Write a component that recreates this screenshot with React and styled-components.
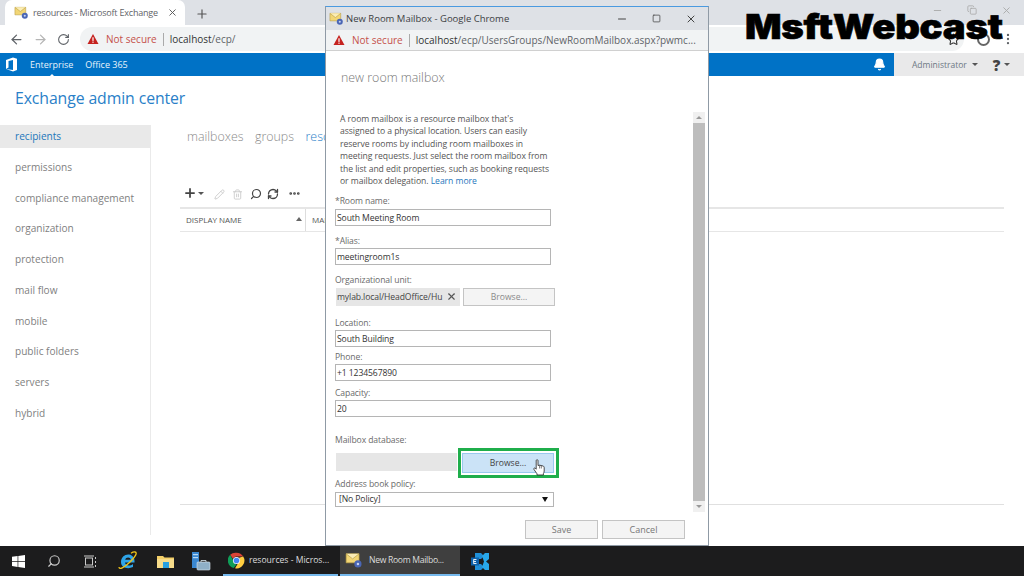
import React from 'react';
import styled, { createGlobalStyle } from 'styled-components';
import { ArrowLeft, ArrowRight, RotateCw, Plus, X, Minus, Square, Copy, Search, Pencil, Trash2, RefreshCw, MoreHorizontal, Star, Bell, MoreVertical } from 'lucide-react';

const Global = createGlobalStyle`
  html, body { margin: 0; padding: 0; background: #fff; }
  * { box-sizing: border-box; }
`;

const Screen = styled.div`
  position: relative;
  width: 1024px;
  height: 576px;
  overflow: hidden;
  display: flex;
  flex-direction: column;
  font-family: "Open Sans", "Liberation Sans", sans-serif;
  background: #fff;
`;

const TabStrip = styled.div`
  height: 25px;
  flex: none;
  background: #dee1e6;
  display: flex;
  align-items: flex-end;
  padding-left: 5px;
`;

const Tab = styled.div`
  width: 180px;
  height: 25px;
  background: #fff;
  border-radius: 7px 7px 0 0;
  display: flex;
  align-items: center;
  gap: 4px;
  padding: 0 0 0 9px;
  font-size: 9px;
  letter-spacing: -0.2px;
  color: #5f6368;
  white-space: nowrap;
`;

const TabTitle = styled.span`
  width: 130px;
`;

const TabClose = styled.span`
  display: flex;
  color: #555;
`;

const NewTab = styled.span`
  display: flex;
  margin: 0 0 4px 10px;
  color: #555;
`;

const BrowserBar = styled.div`
  height: 28px;
  flex: none;
  background: #fff;
  display: flex;
  align-items: center;
  padding: 0 0 0 9px;
  gap: 9px;
  color: #5f6368;
`;

const Omnibox = styled.div`
  margin-left: 1px;
  width: 884px;
  height: 24px;
  flex: none;
  border-radius: 12px;
  background: #f1f3f4;
  display: flex;
  align-items: center;
  padding: 0 4px 0 7px;
  font-size: 10px;
  color: #333;
`;

const Warning = styled.span`
  color: #c5504a;
  display: flex;
  align-items: center;
  gap: 7px;
  white-space: nowrap;
`;

const UrlDivider = styled.span`
  width: 1px;
  height: 13px;
  background: #aaa;
  margin: 0 6px;
  flex: none;
`;

const UrlRest = styled.span`
  color: #5f6368;
`;

const StarSlot = styled.span`
  margin-left: auto;
  display: flex;
`;

const Avatar = styled.span`
  width: 13px;
  height: 13px;
  margin: 0 2px 0 4px;
  flex: none;
  border-radius: 50%;
  border: 2.5px solid #666;
`;

const NavBar = styled.div`
  height: 23px;
  flex: none;
  background: #0072c6;
  display: flex;
  align-items: center;
  color: #fff;
  font-size: 9px;
`;

const NavLink = styled.span`
  position: relative;
  display: flex;
  margin-left: ${p => p.$gap}px;
  color: #e8f2fb;
  &::after {
    content: ${p => p.$active ? "''" : 'none'};
    position: absolute;
    left: 50%;
    bottom: -6px;
    margin-left: -3px;
    border: 3px solid transparent;
    border-top: 0;
    border-bottom-color: #fff;
  }
`;

const NavRight = styled.div`
  margin-left: auto;
  height: 100%;
  display: flex;
  align-items: center;
`;

const BellBox = styled.div`
  width: 30px;
  display: flex;
  justify-content: flex-start;
  padding-left: 9px;
`;

const UserBox = styled.div`
  width: 130px;
  height: 100%;
  background: #e9e9ea;
  color: #6d7884;
  display: flex;
  align-items: center;
  padding-left: 18px;
  font-size: 8.5px;
`;

const Caret = styled.span`
  display: inline-block;
  flex: none;
  border: ${p => p.$big ? 3.5 : 3}px solid transparent;
  border-bottom: 0;
  border-top: ${p => p.$big ? 5 : 3.5}px solid ${p => p.$color || '#555'};
  margin-left: ${p => p.$gap || 5}px;
`;

const HelpMark = styled.span`
  font-weight: 800;
  font-size: 15px;
  color: #444;
  margin-left: 15px;
`;

const Body = styled.div`
  flex: 1;
  min-height: 0;
  display: flex;
  flex-direction: column;
  background: #fff;
`;

const AdminTitle = styled.h1`
  margin: 0;
  height: 49px;
  padding: 11px 0 0 15px;
  font-size: 15.8px;
  font-weight: 400;
  letter-spacing: -0.1px;
  color: #2a80c8;
  flex: none;
`;

const Columns = styled.div`
  flex: 1;
  display: flex;
`;

const Sidebar = styled.nav`
  width: 151px;
  height: 410px;
  flex: none;
  border-right: 1px solid #eaeaea;
`;

const SideItem = styled.div`
  height: 30.75px;
  padding: 0 0 0 15px;
  font-size: 10.1px;
  line-height: 23px;
  color: ${p => p.$active ? '#2377bb' : '#7f7f7f'};
  background: ${p => p.$active ? 'linear-gradient(#e9e9e9 0 23px, transparent 23px)' : 'transparent'};
`;

const Main = styled.div`
  flex: 1;
  padding: 0 20px 0 29px;
  display: flex;
  flex-direction: column;
`;

const SubTabs = styled.div`
  display: flex;
  gap: 11.5px;
  padding: 0 0 0 7px;
  font-size: 12.4px;
  font-weight: 300;
  height: 23px;
  line-height: 23px;
`;

const SubTab = styled.span`
  color: ${p => p.$active ? '#2a80c8' : '#8a8a8a'};
`;

const ListToolbar = styled.div`
  height: 59px;
  display: flex;
  align-items: flex-end;
  padding: 0 0 7px 3px;
  color: #444;
`;

const ToolSlot = styled.span`
  width: ${p => p.$w}px;
  display: flex;
  align-items: center;
  flex: none;
`;

const TableHead = styled.div`
  height: 25px;
  border-top: 2px solid #e6e6e6;
  border-bottom: 1px solid #e6e6e6;
  display: flex;
  align-items: center;
  font-size: 8px;
  color: #555;
`;

const HeadCell = styled.div`
  width: ${p => p.$w}px;
  height: 100%;
  display: flex;
  align-items: center;
  justify-content: space-between;
  padding: 0 3px 2px 6px;
  border-right: 1px solid #ddd;
`;

const SortUp = styled.span`
  border: 3px solid transparent;
  border-top: 0;
  border-bottom: 4px solid #666;
`;

const TableFill = styled.div`
  height: 273px;
  border-bottom: 1px solid #e0e0e0;
`;

const Taskbar = styled.div`
  height: 30px;
  flex: none;
  background: #1c1c1d;
  display: flex;
  align-items: center;
  color: #ddd;
`;

const TrayIcon = styled.div`
  width: ${p => p.$w || 36}px;
  height: 100%;
  flex: none;
  display: flex;
  align-items: center;
  justify-content: center;
`;

const TaskApp = styled.div`
  width: ${p => p.$w}px;
  height: 100%;
  flex: none;
  margin-left: ${p => p.$gap || 0}px;
  display: flex;
  align-items: center;
  gap: ${p => p.$open ? 6 : 4}px;
  padding-left: 5px;
  font-size: 8.6px;
  letter-spacing: ${p => p.$open ? -0.3 : 0}px;
  white-space: nowrap;
  background: ${p => p.$open ? '#3f3f3f' : 'transparent'};
  border-bottom: 2px solid #76b9ed;
`;

const Popup = styled.section`
  position: absolute;
  left: 325px;
  top: 6px;
  width: 384px;
  height: 540px;
  background: #fff;
  border: 1px solid #8f9aa5;
  border-top-color: #4a9ae0;
  display: flex;
  flex-direction: column;
`;

const PopupTitle = styled.div`
  height: 23px;
  flex: none;
  background: #dee1e6;
  display: flex;
  align-items: center;
  padding: 0 11px 0 3px;
  gap: 2px;
  font-size: 9.5px;
  color: #3c4043;
`;

const WinControls = styled.div`
  margin-left: auto;
  display: flex;
  align-items: center;
  gap: 24px;
  color: #444;
`;

const PopupUrl = styled.div`
  height: 21px;
  flex: none;
  background: #f1f3f4;
  border-bottom: 1px solid #d0d0d0;
  display: flex;
  align-items: center;
  padding: 0 0 0 7px;
  font-size: 10px;
  color: #333;
  white-space: nowrap;
`;

const PopupBody = styled.div`
  position: relative;
  flex: 1;
  min-height: 0;
  padding: 19px 0 0 14px;
`;

const DialogTitle = styled.h2`
  margin: 0 0 27px 1px;
  font-size: 12.4px;
  line-height: 16px;
  font-weight: 300;
  color: #777;
`;

const Intro = styled.p`
  margin: 0 0 8px;
  white-space: nowrap;
  font-size: 8.6px;
  line-height: 12.4px;
  letter-spacing: -0.05px;
  color: #555;
  a { color: #1e77bd; }
`;

const Form = styled.div`
  margin-left: -5px;
  width: 222px;
`;

const Label = styled.div`
  font-size: 8.6px;
  line-height: 12px;
  height: 12px;
  letter-spacing: -0.1px;
  color: #6a6a6a;
  margin-top: ${p => p.$top || 0}px;
`;

const Input = styled.div`
  height: 17px;
  width: 216px;
  border: 1px solid #b5b5b5;
  padding: 1px 0 0 1px;
  font-size: 8.6px;
  line-height: 15px;
  letter-spacing: -0.1px;
  color: #333;
  margin-top: 1.5px;
`;

const PickRow = styled.div`
  display: flex;
  align-items: flex-start;
  margin-top: ${p => p.$top || 2}px;
  gap: ${p => p.$gap || 3}px;
  width: 240px;
`;

const PickValue = styled.div`
  width: ${p => p.$w}px;
  margin-left: 1px;
  height: 18px;
  flex: none;
  background: #e6e6e6;
  display: flex;
  align-items: center;
  justify-content: space-between;
  padding: 0 3px 0 1px;
  font-size: 8.6px;
  letter-spacing: -0.1px;
  color: #444;
  overflow: hidden;
  white-space: nowrap;
`;

const ClipText = styled.span`
  width: 107px;
  overflow: hidden;
`;

const BrowseButton = styled.div`
  position: relative;
  width: 92px;
  height: ${p => p.$hot ? 20 : 18}px;
  flex: none;
  border: 1px solid ${p => p.$hot ? '#99c9ee' : '#c4c4c4'};
  background: ${p => p.$hot ? '#cbe3f7' : '#f4f4f4'};
  font-size: 8.6px;
  line-height: ${p => p.$hot ? 18 : 16}px;
  text-align: center;
  color: ${p => p.$hot ? '#444' : '#8a8a8a'};
`;

const GreenFrame = styled.span`
  position: absolute;
  inset: -6px -6px -6px -5px;
  border: 3px solid #1fae4b;
`;

const HandCursor = styled.span`
  position: absolute;
  left: 70px;
  top: 5px;
  display: flex;
`;

const Select = styled.div`
  width: 219px;
  height: 15px;
  margin-top: 2px;
  border: 1px solid #b5b5b5;
  display: flex;
  align-items: center;
  justify-content: space-between;
  padding: 0 5px 0 3px;
  font-size: 8.6px;
  letter-spacing: -0.1px;
  color: #333;
`;

const Scrollbar = styled.div`
  position: absolute;
  right: 3px;
  top: 61px;
  bottom: 33px;
  width: 12px;
  background: #f0f0f0;
  display: flex;
  flex-direction: column;
  align-items: center;
  justify-content: space-between;
  padding: 4px 0;
`;

const ScrollThumb = styled.div`
  flex: 1;
  width: 100%;
  margin: 4px 0;
  background: #bdbdbd;
`;

const ScrollArrow = styled.span`
  border: 3px solid transparent;
  ${p => p.$up ? 'border-top: 0; border-bottom: 3px solid #999;' : 'border-bottom: 0; border-top: 3px solid #999;'}
`;

const Footer = styled.div`
  position: absolute;
  left: 199px;
  bottom: 6px;
  display: flex;
  gap: 4px;
`;

const FootButton = styled.div`
  width: ${p => p.$w}px;
  height: 19px;
  border: 1px solid #c4c4c4;
  background: #f4f4f4;
  font-size: 9px;
  line-height: 17px;
  text-align: center;
  color: #777;
`;

const Watermark = styled.div`
  position: absolute;
  left: 745px;
  top: 4px;
  font-family: "Inter", "Liberation Sans", sans-serif;
  font-weight: 900;
  font-size: 34px;
  line-height: 46px;
  letter-spacing: -0.2px;
  color: #000;
  -webkit-text-stroke: 0.6px #000;
  white-space: nowrap;
  transform: scaleX(1.125);
  transform-origin: left center;
`;

const FaintControls = styled.div`
  position: absolute;
  left: 932px;
  top: 5px;
  display: flex;
  gap: 24px;
  color: #aaa;
`;

const MailIcon = ({ size = 15 }) => (
  <svg width={size} height={size} viewBox="0 0 16 16" style={{ flex: 'none' }}>
    <path d="M1 2.5 L12.5 2.5 L12.5 10.5 L1 10.5 Z" fill="#f2d675" stroke="#b59b45" strokeWidth="0.6" />
    <path d="M1 2.5 L6.8 7 L12.5 2.5" fill="#fbedb5" stroke="#b59b45" strokeWidth="0.6" />
    <circle cx="11.5" cy="11.5" r="3.2" fill="#4a66b5" />
    <circle cx="11.5" cy="11.5" r="1.1" fill="#c8d4f0" />
  </svg>
);

const WarnIcon = ({ size = 12 }) => (
  <svg width={size} height={size} viewBox="0 0 12 12">
    <path d="M6 1 L11.5 11 L0.5 11 Z" fill="#c5221f" />
    <rect x="5.4" y="4.3" width="1.2" height="3.6" fill="#fff" />
    <rect x="5.4" y="8.6" width="1.2" height="1.2" fill="#fff" />
  </svg>
);

const OfficeLogo = () => (
  <svg width="13" height="15" viewBox="0 0 13 15">
    <path d="M1 3 L8 0.5 L12 1.8 L12 13 L8 14.5 L1 12 L8 13 L8 3 L3.5 4 L3.5 10.5 L1 12 Z" fill="#fff" />
  </svg>
);

const WindowsLogo = () => (
  <svg width="13" height="13" viewBox="0 0 13 13" fill="#fff">
    <path d="M0 1.8 L5.6 1 L5.6 6 L0 6 Z M6.3 0.9 L13 0 L13 6 L6.3 6 Z M0 6.8 L5.6 6.8 L5.6 11.9 L0 11.1 Z M6.3 6.8 L13 6.8 L13 13 L6.3 12.1 Z" />
  </svg>
);

const TaskViewIcon = () => (
  <svg width="13" height="13" viewBox="0 0 13 13" fill="none" stroke="#ccc" strokeWidth="1">
    <rect x="1.5" y="3" width="7" height="7" />
    <path d="M0 1 H10 M0 12 H10 M11.5 2 V4 M11.5 6 V8 M11.5 10 V12" />
  </svg>
);

const IeIcon = () => (
  <svg width="20" height="20" viewBox="0 0 20 20">
    <path d="M3 11 C3 6 7 3 11 3.5 C15 4 17 8 16.5 11.5 L7 11.5 C7.5 15 12 15.5 15 13 L15 16 C10 18.5 3 17 3 11 Z M7.2 8.8 L12.8 8.8 C12.5 5.8 7.8 5.8 7.2 8.8 Z" fill="#2ea4e8" fillRule="evenodd" />
    <path d="M1 16 C1 19 6 17 12 11 C17 6 20 1.5 17 1 C15.8 0.8 14 1.6 13 2.3" fill="none" stroke="#f0c419" strokeWidth="1.3" />
  </svg>
);

const FolderIcon = () => (
  <svg width="17" height="15" viewBox="0 0 17 15">
    <path d="M0 2 L6 2 L7.5 3.5 L17 3.5 L17 14 L0 14 Z" fill="#f3cf68" />
    <rect x="0" y="5" width="17" height="9" fill="#f7dc8a" />
    <rect x="6" y="8" width="6" height="6" fill="#29a0e0" />
  </svg>
);

const ServerManagerIcon = () => (
  <svg width="20" height="20" viewBox="0 0 20 20">
    <rect x="1" y="1" width="7" height="16" fill="#3a87d0" />
    <rect x="2" y="3" width="5" height="1.2" fill="#b7d8f4" />
    <rect x="2" y="6" width="5" height="1.2" fill="#b7d8f4" />
    <rect x="6" y="11" width="13" height="8" rx="1" fill="#8fb0c8" stroke="#dce8f0" strokeWidth="0.6" />
    <path d="M10 11 V9.5 H15 V11" fill="none" stroke="#dce8f0" strokeWidth="0.8" />
  </svg>
);

const ChromeIcon = () => (
  <svg width="17" height="17" viewBox="0 0 48 48" style={{ flex: 'none' }}>
    <path d="M24 2 A22 22 0 0 1 43 13 L24 13 A11 11 0 0 0 14 19 L6 8 A22 22 0 0 1 24 2 Z" fill="#db4437" />
    <path d="M6 8 L16 26 A11 11 0 0 0 24 35 L16 45 A22 22 0 0 1 6 8 Z" fill="#0f9d58" />
    <path d="M43 13 A22 22 0 0 1 20 46 L30 29 A11 11 0 0 0 31 16 Z" fill="#ffcd40" />
    <circle cx="24" cy="24" r="10" fill="#fff" />
    <circle cx="24" cy="24" r="8" fill="#4285f4" />
  </svg>
);

const ExchangeIcon = () => (
  <svg width="18" height="17" viewBox="0 0 18 17">
    <path d="M4 0 H10 L13 3 L10 6 H4 Z M10 11 H4 V17 H10 L13 14 Z" fill="#1f8fd8" />
    <path d="M11 3 L14 0 H18 V6 L15 8.5 L18 11 V17 H14 L11 14 L13 8.5 Z" fill="#28a8ea" />
    <rect x="0" y="4.5" width="8" height="8" fill="#0f62ab" />
    <path d="M2.5 6.5 H5.5 M2.5 8.5 H5 M2.5 10.5 H5.5 M2.7 6.5 V10.5" stroke="#fff" strokeWidth="0.9" fill="none" />
  </svg>
);

// pointer hand over the highlighted Browse button
const PointerHand = () => (
  <svg width="12" height="17" viewBox="0 0 12 17">
    <path d="M3.2 1.6 C3.2 0.4 5 0.4 5 1.6 L5 6.5 L6.6 6.2 L8.2 6.5 L10 7 C10.9 7.3 11.2 7.9 11.2 8.8 L11.2 12 C11.2 13 10.8 13.8 10.4 14.6 L10.4 16 L4 16 L4 14.8 L1 10.5 C0.3 9.5 1.4 8.5 2.3 9.3 L3.2 10.2 Z" fill="#fff" stroke="#222" strokeWidth="0.8" strokeLinejoin="round" />
    <path d="M6.6 6.4 V9.5 M8.3 6.6 V9.5" stroke="#222" strokeWidth="0.6" fill="none" />
  </svg>
);

const sideItems = ['recipients', 'permissions', 'compliance management', 'organization', 'protection', 'mail flow', 'mobile', 'public folders', 'servers', 'hybrid'];

const App = () => (
  <Screen>
    <Global />
    <TabStrip>
      <Tab>
        <MailIcon />
        <TabTitle>resources - Microsoft Exchange</TabTitle>
        <TabClose><X size={11} /></TabClose>
      </Tab>
      <NewTab><Plus size={14} /></NewTab>
    </TabStrip>
    <BrowserBar>
      <ArrowLeft size={15} />
      <ArrowRight size={15} color="#b5b5b5" />
      <RotateCw size={13} />
      <Omnibox>
        <Warning><WarnIcon />Not secure</Warning>
        <UrlDivider />
        <span>localhost<UrlRest>/ecp/</UrlRest></span>
        <StarSlot><Star size={13} /></StarSlot>
      </Omnibox>
      <Avatar />
      <MoreVertical size={14} />
    </BrowserBar>
    <NavBar>
      <NavLink $gap={5}><OfficeLogo /></NavLink>
      <NavLink $gap={12} $active>Enterprise</NavLink>
      <NavLink $gap={12}>Office 365</NavLink>
      <NavRight>
        <BellBox><Bell size={13} fill="#fff" /></BellBox>
        <UserBox>
          Administrator<Caret />
          <HelpMark>?</HelpMark><Caret $gap={4} />
        </UserBox>
      </NavRight>
    </NavBar>
    <Body>
      <AdminTitle>Exchange admin center</AdminTitle>
      <Columns>
        <Sidebar>
          {sideItems.map((item, i) => (
            <SideItem key={item} $active={i === 0}>{item}</SideItem>
          ))}
        </Sidebar>
        <Main>
          <SubTabs>
            <SubTab>mailboxes</SubTab>
            <SubTab>groups</SubTab>
            <SubTab $active>resources</SubTab>
          </SubTabs>
          <ListToolbar>
            <ToolSlot $w={31}><Plus size={14} strokeWidth={3} /><Caret $gap={1} /></ToolSlot>
            <ToolSlot $w={18}><Pencil size={11} color="#ccc" /></ToolSlot>
            <ToolSlot $w={18}><Trash2 size={11} color="#ccc" /></ToolSlot>
            <ToolSlot $w={17}><Search size={12} strokeWidth={2.4} style={{ transform: 'scaleX(-1)' }} /></ToolSlot>
            <ToolSlot $w={21}><RefreshCw size={12} strokeWidth={2.6} /></ToolSlot>
            <MoreHorizontal size={13} strokeWidth={3} />
          </ListToolbar>
          <TableHead>
            <HeadCell $w={126}>DISPLAY NAME<SortUp /></HeadCell>
            <HeadCell $w={80}>MAILBOX TYPE</HeadCell>
          </TableHead>
          <TableFill />
        </Main>
      </Columns>
    </Body>
    <Taskbar>
      <TrayIcon><WindowsLogo /></TrayIcon>
      <TrayIcon><Search size={14} color="#ccc" style={{ transform: 'scaleX(-1)' }} /></TrayIcon>
      <TrayIcon><TaskViewIcon /></TrayIcon>
      <TrayIcon $w={39}><IeIcon /></TrayIcon>
      <TrayIcon><FolderIcon /></TrayIcon>
      <TrayIcon><ServerManagerIcon /></TrayIcon>
      <TaskApp $w={115} $gap={4}><ChromeIcon />resources - Micros...</TaskApp>
      <TaskApp $w={120} $gap={2} $open><MailIcon size={18} />New Room Mailbo...</TaskApp>
      <TrayIcon $w={40}><ExchangeIcon /></TrayIcon>
    </Taskbar>

    <Popup>
      <PopupTitle>
        <MailIcon />
        <span>New Room Mailbox - Google Chrome</span>
        <WinControls>
          <Minus size={12} />
          <Square size={9} strokeWidth={2} />
          <X size={12} />
        </WinControls>
      </PopupTitle>
      <PopupUrl>
        <Warning><WarnIcon />Not secure</Warning>
        <UrlDivider />
        <span>localhost<UrlRest>/ecp/UsersGroups/NewRoomMailbox.aspx?pwmc...</UrlRest></span>
      </PopupUrl>
      <PopupBody>
        <DialogTitle>new room mailbox</DialogTitle>
        <Intro>
          A room mailbox is a resource mailbox that's<br />
          assigned to a physical location. Users can easily<br />
          reserve rooms by including room mailboxes in<br />
          meeting requests. Just select the room mailbox from<br />
          the list and edit properties, such as booking requests<br />
          or mailbox delegation. <a>Learn more</a>
        </Intro>
        <Form>
          <Label>*Room name:</Label>
          <Input>South Meeting Room</Input>
          <Label $top={9}>*Alias:</Label>
          <Input>meetingroom1s</Input>
          <Label $top={8.5}>Organizational unit:</Label>
          <PickRow>
            <PickValue $w={124}>
              <ClipText>mylab.local/HeadOffice/Hu</ClipText>
              <X size={11} strokeWidth={2.5} color="#555" />
            </PickValue>
            <BrowseButton>Browse...</BrowseButton>
          </PickRow>
          <Label $top={11}>Location:</Label>
          <Input>South Building</Input>
          <Label $top={3.5}>Phone:</Label>
          <Input>+1 1234567890</Input>
          <Label $top={5.5}>Capacity:</Label>
          <Input>20</Input>
          <Label $top={16.5}>Mailbox database:</Label>
          <PickRow $top={7} $gap={5}>
            <PickValue $w={121} />
            <BrowseButton $hot>
              Browse...
              <GreenFrame />
              <HandCursor><PointerHand /></HandCursor>
            </BrowseButton>
          </PickRow>
          <Label $top={5}>Address book policy:</Label>
          <Select>[No Policy]<Caret $big $color="#111" /></Select>
        </Form>
        <Scrollbar>
          <ScrollArrow $up />
          <ScrollThumb />
          <ScrollArrow />
        </Scrollbar>
        <Footer>
          <FootButton $w={73}>Save</FootButton>
          <FootButton $w={83}>Cancel</FootButton>
        </Footer>
      </PopupBody>
    </Popup>

    <FaintControls>
      <Minus size={11} />
      <Copy size={10} />
      <X size={11} />
    </FaintControls>
    <Watermark>MsftWebcast</Watermark>
  </Screen>
);

export default App;
